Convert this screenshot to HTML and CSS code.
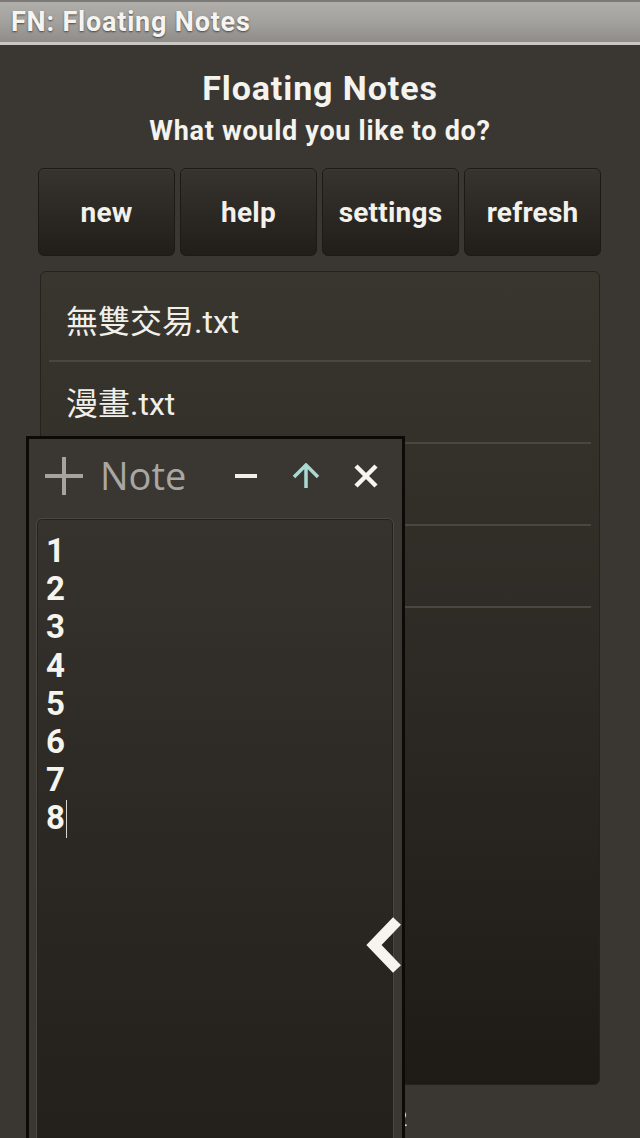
FILE: index.html
```html
<!DOCTYPE html>
<html>
<head>
<meta charset="utf-8">
<link rel="stylesheet" href="styles.css">
</head>
<body>
<div class="screen">
  <div class="titlebar"><span class="titlebar-text">FN: Floating Notes</span></div>
  <div class="main">
    <h1 class="heading">Floating Notes</h1>
    <p class="subheading">What would you like to do?</p>
    <div class="actions">
      <div class="btn">new</div>
      <div class="btn">help</div>
      <div class="btn">settings</div>
      <div class="btn">refresh</div>
    </div>
    <div class="filelist">
      <div class="file">無雙交易.txt</div>
      <div class="file">漫畫.txt</div>
      <div class="file"></div>
      <div class="file"></div>
    </div>
    <div class="footer">Floating Notes v1.2</div>
  </div>

  <div class="note-window">
    <div class="note-header">
      <svg class="ic-plus" width="40" height="40" viewBox="0 0 40 40"><path d="M20 1V39M1 20H39" stroke="#a5a39f" stroke-width="4" fill="none"/></svg>
      <span class="note-title">Note</span>
      <div class="note-tools">
        <svg class="ic" width="24" height="24" viewBox="0 0 24 24"><path d="M1 12H23" stroke="#f2efea" stroke-width="4" fill="none"/></svg>
        <svg class="ic" width="28" height="26" viewBox="0 0 28 26"><path d="M14 25V3M2 14L14 2L26 14" stroke="#a9d9d1" stroke-width="3.5" fill="none"/></svg>
        <svg class="ic" width="26" height="26" viewBox="0 0 26 26"><path d="M3 3L23 23M23 3L3 23" stroke="#f7f5f0" stroke-width="4.5" fill="none"/></svg>
      </div>
    </div>
    <div class="note-body">
      <div class="note-text">1<br>2<br>3<br>4<br>5<br>6<br>7<br>8<span class="caret"></span></div>
    </div>
  </div>

  <svg class="chevron" width="40" height="56" viewBox="0 0 40 56"><path d="M34 4L11 28L34 52" stroke="#f6f4ef" stroke-width="11" fill="none" stroke-linejoin="miter" stroke-miterlimit="4"/></svg>
</div>
</body>
</html>
```

FILE: styles.css
```css
* { box-sizing: border-box; }
html, body { margin: 0; padding: 0; }
body {
  width: 640px;
  height: 1138px;
  overflow: hidden;
  background: #3a3732;
  font-family: Roboto, "Noto Sans CJK TC", sans-serif;
  color: #f5f3ee;
}
.screen {
  position: relative;
  width: 640px;
  height: 1138px;
  overflow: hidden;
  background: #3a3732;
}
.titlebar {
  height: 45px;
  background: linear-gradient(#b0aeaa, #a3a19d 50%, #8f8d89);
  border-top: 2px solid #7c7a76;
  border-bottom: 3px solid #c9c7c3;
  display: flex;
  align-items: center;
  padding-left: 11px;
}
.titlebar-text {
  font-weight: 700;
  font-size: 27px;
  letter-spacing: 0.8px;
  color: #f6f4f0;
  text-shadow: 0 1px 2px rgba(0,0,0,0.55);
}
.main {
  display: flex;
  flex-direction: column;
  padding: 0 38px;
}
.heading {
  margin: 23px 0 0;
  height: 40px;
  line-height: 40px;
  text-align: center;
  font-size: 34px;
  letter-spacing: 0.9px;
  font-weight: 700;
}
.subheading {
  margin: 8px 0 0;
  height: 30px;
  line-height: 30px;
  text-align: center;
  font-size: 27px;
  letter-spacing: 0.7px;
  font-weight: 700;
}
.actions {
  margin-top: 22px;
  display: grid;
  grid-template-columns: repeat(4, 137px);
  gap: 5px;
  height: 88px;
}
.btn {
  border: 1px solid #1d1a16;
  border-radius: 6px;
  background: linear-gradient(#37342f, #2b2823 55%, #211e19);
  display: flex;
  align-items: center;
  justify-content: center;
  font-size: 28px;
  letter-spacing: 0.2px;
  font-weight: 700;
  color: #f3f1ec;
  box-shadow: inset 0 1px 0 rgba(255,255,255,0.04);
}
.filelist {
  margin: 15px 2px 0;
  height: 814px;
  border: 1px solid #25221d;
  border-radius: 6px;
  background: linear-gradient(#39362f, #2d2a25 50%, #1e1b16);
  padding: 8px 8px 0;
}
.file {
  height: 82px;
  border-bottom: 2px solid #4a4742;
  display: flex;
  align-items: center;
  padding-left: 17px;
  padding-bottom: 3px;
  font-size: 32px;
  color: #f1efea;
}
.footer {
  margin-top: 22px;
  text-align: center;
  font-size: 20px;
  color: #e8e6e1;
  padding-left: 2px;
}
.note-window {
  position: absolute;
  left: 26px;
  top: 436px;
  width: 379px;
  height: 760px;
  border: 3px solid #0c0a06;
  background: #3a3732;
  padding: 0 8px 0 7px;
  display: flex;
  flex-direction: column;
}
.note-header {
  height: 79px;
  display: flex;
  align-items: center;
  padding-left: 8px;
  padding-bottom: 5px;
}
.ic-plus { flex: none; }
.note-title {
  margin-left: 16px;
  font-family: "Open Sans", "DejaVu Sans", sans-serif;
  font-size: 38px;
  color: #a9a7a3;
  line-height: 1;
  padding-bottom: 2px;
}
.note-tools {
  margin-left: 44px;
  display: flex;
  align-items: center;
  gap: 0;
}
.note-tools .ic:nth-child(1) { margin-left: 4px; }
.note-tools .ic:nth-child(2) { margin-left: 34px; }
.note-tools .ic:nth-child(3) { margin-left: 33px; }
.note-body {
  flex: 1;
  border: 1px solid #4a4742;
  border-radius: 6px;
  background: linear-gradient(#36332e, #2b2823 50%, #221f1a);
  padding: 13px 0 0 9px;
  box-shadow: inset 0 0 0 1px #25221d;
}
.note-text {
  font-size: 33px;
  font-weight: 700;
  line-height: 38.2px;
  color: #f6f4ef;
}
.caret {
  display: inline-block;
  width: 1px;
  height: 38px;
  background: #d8d6d1;
  vertical-align: -9px;
  margin-left: 1px;
}
.chevron {
  position: absolute;
  left: 363px;
  top: 917px;
}
```
